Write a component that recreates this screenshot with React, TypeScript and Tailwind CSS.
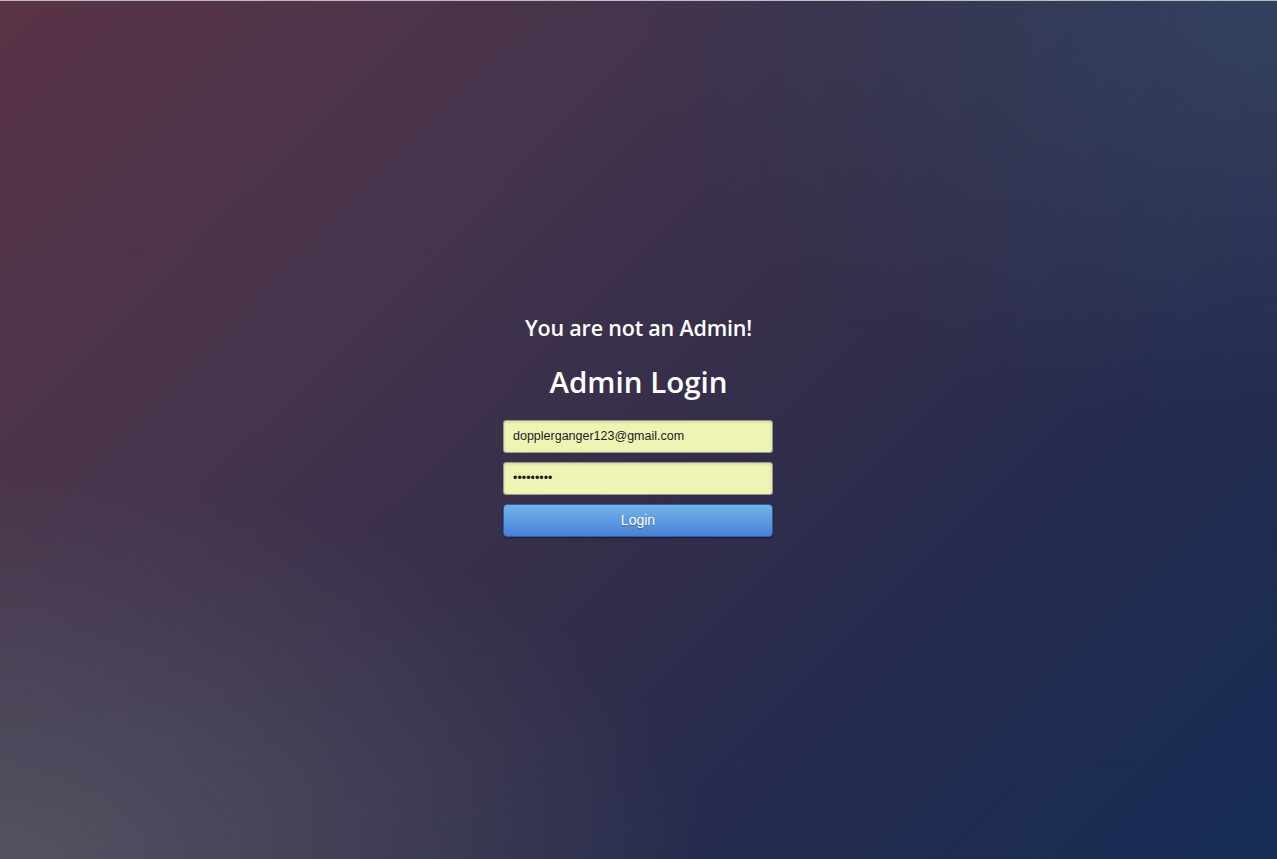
import React from "react";

export default function App() {
  return (
    <div
      className="relative w-full h-[859px] overflow-hidden border-t border-[#bdbdbd] flex flex-col items-center justify-center"
      style={{
        background:
          "radial-gradient(ellipse 55% 45% at 0% 100%, rgba(85,85,100,0.9) 0%, rgba(85,85,100,0) 100%), radial-gradient(ellipse 50% 50% at 100% 0%, rgba(50,66,96,0.95) 0%, rgba(50,66,96,0) 100%), linear-gradient(135deg, #5a3346 0%, #45344c 30%, #352e4a 52%, #262b4e 72%, #152c55 100%)",
      }}
    >
      <div className="flex flex-col items-center font-['Open_Sans',sans-serif] text-white -mt-[11px]">
        <h2 className="text-[21.5px] font-semibold leading-[30px] tracking-[-0.2px]">You are not an Admin!</h2>
        <h1 className="text-[29.5px] font-semibold leading-[40px] mt-[19px]">Admin Login</h1>
        <form className="mt-[18px] flex flex-col gap-[9px] w-[270px] font-['Liberation_Sans',Arial,sans-serif] -ml-px">
          <input
            type="text"
            defaultValue="dopplerganger123@gmail.com"
            className="h-[33px] w-full rounded-[3px] border border-[#9a9a8a] bg-[#eff4b4] px-[9px] text-[12.5px] text-[#1c1c1c] shadow-[inset_0_1px_3px_rgba(0,0,0,0.15)] outline-none"
          />
          <input
            type="password"
            defaultValue="123456789"
            className="h-[33px] w-full rounded-[3px] border border-[#9a9a8a] bg-[#eff4b4] px-[9px] text-[12.5px] text-[#1c1c1c] shadow-[inset_0_1px_3px_rgba(0,0,0,0.15)] outline-none"
          />
          <button
            type="button"
            className="h-[33px] w-full rounded-[4px] border border-[#2f5ca8] bg-gradient-to-b from-[#72b5e6] to-[#4a7fd8] text-[14px] text-white [text-shadow:0_1px_1px_rgba(0,0,0,0.3)] shadow-[0_1px_2px_rgba(0,0,0,0.4)]"
          >
            Login
          </button>
        </form>
      </div>
    </div>
  );
}
